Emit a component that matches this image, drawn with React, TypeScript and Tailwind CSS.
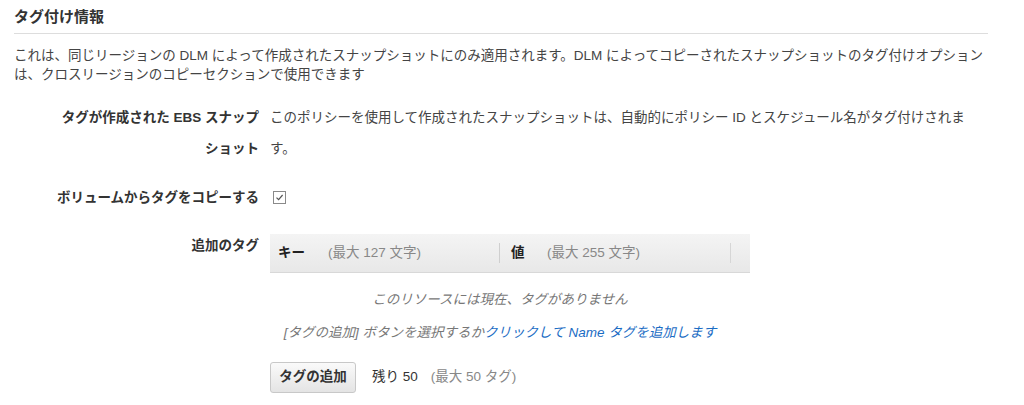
import React from "react";

const font = "font-['Liberation_Sans','Noto_Sans_CJK_JP',sans-serif]";

function Row({ label, children, className = "" }: { label: React.ReactNode; children: React.ReactNode; className?: string }) {
  return (
    <div className={`flex items-start ${className}`}>
      <div className="w-[245px] shrink-0 text-right font-bold text-[#333] leading-[31px]">{label}</div>
      <div className="ml-[11px] flex-1">{children}</div>
    </div>
  );
}

export default function App() {
  return (
    <div className={`${font} w-[1024px] h-[405px] bg-white text-[13.5px] text-[#444] pl-[14px] pr-[36px] pt-[6px]`}>
      <h2 className="text-[15px] font-bold text-[#333] leading-[22px]">タグ付け情報</h2>
      <div className="mt-[5px] border-t border-[#dddddd]" />
      <p className="mt-[12px] leading-[19px]">
        これは、同じリージョンの DLM によって作成されたスナップショットにのみ適用されます。DLM によってコピーされたスナップショットのタグ付けオプションは、クロスリージョンのコピーセクションで使用できます
      </p>

      <Row label={<>タグが作成された EBS スナップ<br />ショット</>} className="mt-[18px]">
        <p className="w-[700px] leading-[31px]">
          このポリシーを使用して作成されたスナップショットは、自動的にポリシー ID とスケジュール名がタグ付けされます。
        </p>
      </Row>

      <Row label="ボリュームからタグをコピーする" className="mt-[18px]">
        <div className="h-[31px] flex items-center">
          <span className="ml-[3px] w-[13px] h-[13px] border border-[#8a8a8a] bg-white flex items-center justify-center">
            <svg width="9" height="9" viewBox="0 0 9 9" fill="none">
              <path d="M1.5 4.6 L3.6 6.7 L7.6 2" stroke="#555" strokeWidth="1.2" />
            </svg>
          </span>
        </div>
      </Row>

      <Row label="追加のタグ" className="mt-[17px]">
        <div className="w-[480px] mt-[4px]">
          <div className="flex h-[39px] items-center bg-gradient-to-b from-[#f4f4f4] to-[#e8e8e8] border-b border-[#d8d8d8]">
            <div className="w-[230px] flex items-center pl-[8px] border-r border-[#cfcfcf] h-[20px]">
              <span className="font-bold text-[#222] w-[50px]">キー</span>
              <span className="text-[#888]">(最大 127 文字)</span>
            </div>
            <div className="w-[231px] flex items-center pl-[11px] border-r border-[#d6d6d6] h-[20px]">
              <span className="font-bold text-[#222] w-[36px]">値</span>
              <span className="text-[#888]">(最大 255 文字)</span>
            </div>
          </div>
          <div className="pr-[20px]">
            <div className="italic text-[#777] text-center mt-[17px] leading-[20px]">このリソースには現在、タグがありません</div>
            <div className="italic text-[#777] text-center mt-[13px] leading-[20px] whitespace-nowrap">
              [タグの追加] ボタンを選択するか<span className="text-[#1a6cc4]">クリックして Name タグを追加します</span>
            </div>
          </div>
        </div>
        <div className="flex items-center mt-[19px]">
          <button className="h-[31px] w-[86px] rounded-[3px] border border-[#c8c8c8] bg-gradient-to-b from-[#fafafa] to-[#e4e4e4] font-bold text-[#333]">
            タグの追加
          </button>
          <span className="ml-[16px] text-[#333]">残り 50</span>
          <span className="ml-[13px] text-[#888]">(最大 50 タグ)</span>
        </div>
      </Row>
    </div>
  );
}
